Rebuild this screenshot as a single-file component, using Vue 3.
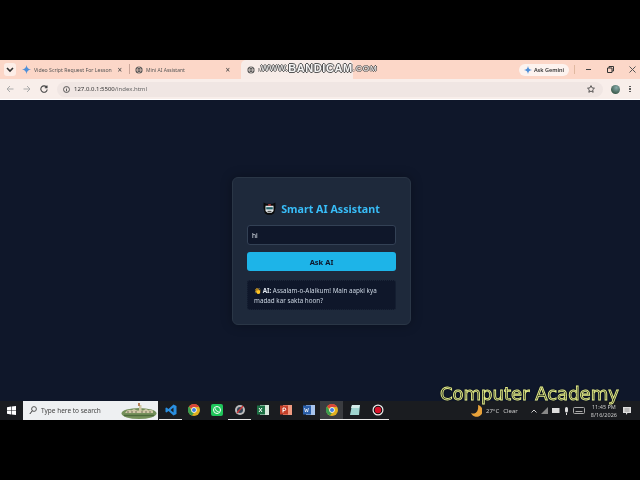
<script setup>
const taskIcons = ['vscode', 'chrome', 'whatsapp', 'eye', 'excel', 'ppt', 'word', 'chrome', 'note', 'rec']
const underlined = ['vscode', 'eye', 'note', 'rec']
</script>

<template>
  <div class="screen">
    <div class="letterbox-top"></div>

    <div class="tabstrip">
      <div class="tab-menu">
        <svg width="8" height="6" viewBox="0 0 8 6"><path d="M1 1l3 3 3-3" fill="none" stroke="#333" stroke-width="1.6" /></svg>
      </div>
      <div class="tab tab-first">
        <svg width="9" height="9" viewBox="0 0 10 10"><path d="M5 0c.5 3 1.500 4.500 5 5-3.500.5-4.500 2-5 5-.5-3-1.500-4.500-5-5 3.500-.5 4.500-2 5-5z" fill="#4f8fd8" /></svg>
        <span class="tab-title">Video Script Request For Lesson</span>
        <span class="tab-x">×</span>
      </div>
      <div class="tab-sep"></div>
      <div class="tab tab-second">
        <svg width="8" height="8" viewBox="0 0 10 10"><circle cx="5" cy="5" r="4.500" fill="#555" /><path d="M1 5h8M5 1c-3 2.500-3 5.500 0 8M5 1c3 2.500 3 5.500 0 8" stroke="#fbd9cb" stroke-width=".8" fill="none" /></svg>
        <span class="tab-title">Mini AI Assistant</span>
        <span class="tab-x">×</span>
      </div>
      <div class="tab tab-active">
        <svg width="8" height="8" viewBox="0 0 10 10"><circle cx="5" cy="5" r="4.500" fill="#555" /><path d="M1 5h8M5 1c-3 2.500-3 5.500 0 8M5 1c3 2.500 3 5.500 0 8" stroke="#f7ece8" stroke-width=".8" fill="none" /></svg>
        <span class="tab-title">M</span>
      </div>
      <div class="strip-right">
        <div class="gemini">
          <svg width="8" height="8" viewBox="0 0 10 10"><path d="M5 0c.5 3 1.500 4.500 5 5-3.500.5-4.500 2-5 5-.5-3-1.500-4.500-5-5 3.500-.5 4.500-2 5-5z" fill="#4f8fd8" /></svg>
          <span>Ask Gemini</span>
        </div>
        <div class="strip-sep"></div>
        <div class="win-controls">
          <svg width="7" height="7" viewBox="0 0 7 7"><path d="M1 3.500h5" stroke="#444" /></svg>
          <svg width="7" height="7" viewBox="0 0 7 7"><path d="M.5 2h4.500v4.500h-4.500zM2 2V.5h4.500V5H5" fill="none" stroke="#333" /></svg>
          <svg width="7" height="7" viewBox="0 0 7 7"><path d="M.5.5l6 6M6.500.5l-6 6" stroke="#555" /></svg>
        </div>
      </div>
    </div>

    <div class="toolbar">
      <svg class="nav" width="8" height="8" viewBox="0 0 8 8"><path d="M7.500 4H1M4 1L1 4l3 3" fill="none" stroke="#aaa" /></svg>
      <svg class="nav" width="8" height="8" viewBox="0 0 8 8"><path d="M.5 4H7M4 1l3 3-3 3" fill="none" stroke="#aaa" /></svg>
      <svg class="nav" width="8" height="8" viewBox="0 0 8 8"><path d="M6.800 2.500A3.200 3.200 0 1 0 7.200 4.500M7 .5v2.300H4.800" fill="none" stroke="#444" stroke-width="1.100" /></svg>
      <div class="omnibox">
        <svg width="7" height="7" viewBox="0 0 8 8"><circle cx="4" cy="4" r="3.400" fill="none" stroke="#444" /><path d="M4 3.500V6M4 2v.8" stroke="#444" /></svg>
        <span class="url">127.0.0.1:5500<span class="url-path">/index.html</span></span>
        <svg class="star" width="8" height="8" viewBox="0 0 10 10"><path d="M5 .8l1.300 2.800 3 .4-2.200 2.100.6 3L5 7.600 2.300 9.100l.6-3L.7 4l3-.4z" fill="none" stroke="#333" /></svg>
      </div>
      <div class="avatar"></div>
      <div class="dots"><i></i><i></i><i></i></div>
    </div>

    <main class="page">
      <div class="card">
        <h1 class="title">
          <svg width="13" height="13" viewBox="0 0 12 12">
            <path d="M.5 .5l2.500 1.200h6L11.500 .5v5l-1.200 4.800-2.300 1.500H4l-2.300-1.500L.5 5.500z" fill="#0a0a0a" />
            <path d="M2.300 3.500h7.400v4.800L8 10H4L2.300 8.300z" fill="#e4e8ea" />
            <path d="M3 4.800h6v2H3z" fill="#1f5f66" />
            <path d="M4.800 2.100h2.400v1.300H4.800z" fill="#c44" />
            <path d="M4.200 8.200h3.600v.8H4.200z" fill="#222" />
          </svg>
          <span>Smart AI Assistant</span>
        </h1>
        <input class="prompt" value="hi" />
        <button class="ask">Ask AI</button>
        <div class="reply">
          <span class="wave">👋</span> <b>AI:</b> Assalam-o-Alaikum! Main aapki kya madad kar sakta hoon?
        </div>
      </div>
    </main>

    <div class="taskbar">
      <svg class="start" width="9" height="9" viewBox="0 0 9 9"><path d="M0 1.200l4-.6v3.600H0zM4.600.5L9 0v4.200H4.600zM0 4.800h4v3.600l-4-.6zM4.600 4.800H9V9l-4.400-.6z" fill="#fff" /></svg>
      <div class="search">
        <svg width="8" height="9" viewBox="0 0 8 9"><circle cx="5" cy="3" r="2.400" fill="none" stroke="#333" stroke-width=".8" /><path d="M3.300 4.800L.8 8" stroke="#333" /></svg>
        <span>Type here to search</span>
        <svg class="search-art" width="36" height="17" viewBox="0 0 36 17">
          <ellipse cx="18" cy="11.500" rx="17.500" ry="5.500" fill="#74905a" />
          <path d="M4 11h28V8.500l-3-.8-1 .8-3-1.500-3 1.500h-1.500V3h-2.500v5.500h-2l-3-1.500-3 1.500-1-.8-3 .8z" fill="#cfc7a6" />
          <path d="M17 1h2v3h-2z" fill="#b5805a" />
          <path d="M7 11v-2M11 11v-2M15 11v-2M21 11v-2M25 11v-2M29 11v-2" stroke="#5a5a48" stroke-width=".8" />
          <path d="M3 13.500h30" stroke="#4e6a3c" stroke-width="1.500" />
        </svg>
      </div>
      <div class="task-icons">
        <div
          v-for="(icon, i) in taskIcons"
          :key="i"
          class="task-icon"
          :class="{ current: i === 7, open: underlined.includes(icon) || i === 7 }"
        >
          <svg v-if="icon === 'vscode'" width="12" height="12" viewBox="0 0 12 12"><path d="M8.500.5L11.500 2v8l-3 1.500L3.500 7 1.500 8.500.5 8V4l1-.5 2 1.500zM8.500 3.500L5.500 6l3 2.500z" fill="#2a8fe0" /></svg>
          <svg v-else-if="icon === 'chrome'" width="12" height="12" viewBox="0 0 12 12">
            <circle cx="6" cy="6" r="6" fill="#e0b020" />
            <path d="M6 0a6 6 0 0 1 5.200 3H6a3 3 0 0 0-2.800 1.800L1 2.300A6 6 0 0 1 6 0z" fill="#d8443a" />
            <path d="M1 2.300l2.400 4.200A3 3 0 0 0 6 9L3.800 11.600A6 6 0 0 1 1 2.300z" fill="#3a9d50" />
            <circle cx="6" cy="6" r="2.700" fill="#fff" /><circle cx="6" cy="6" r="2" fill="#3f7fe0" />
          </svg>
          <svg v-else-if="icon === 'whatsapp'" width="12" height="12" viewBox="0 0 12 12"><rect width="12" height="12" rx="2" fill="#1fc65a" /><circle cx="6" cy="6" r="3.500" fill="none" stroke="#fff" /><path d="M4.500 4.500c0 2 1 3 3 3" stroke="#fff" fill="none" /></svg>
          <svg v-else-if="icon === 'eye'" width="12" height="12" viewBox="0 0 12 12"><circle cx="6" cy="6" r="5" fill="#bbb" /><circle cx="6" cy="6" r="3" fill="#345" /><path d="M3 9l6-7" stroke="#c33" stroke-width="1.300" /></svg>
          <svg v-else-if="icon === 'excel'" width="12" height="12" viewBox="0 0 12 12"><rect x="3" y="1" width="9" height="10" fill="#d8e8dc" /><rect y="1.500" width="8" height="9" fill="#1d7044" /><path d="M2 4l3 4M5 4L2 8" stroke="#fff" /></svg>
          <svg v-else-if="icon === 'ppt'" width="12" height="12" viewBox="0 0 12 12"><rect x="3" y="1" width="9" height="10" fill="#ef9a80" /><rect y="1.500" width="8" height="9" fill="#c4402a" /><path d="M3 8.500V4h1.500a1 1 0 0 1 0 2.500H3" stroke="#fff" fill="none" /></svg>
          <svg v-else-if="icon === 'word'" width="12" height="12" viewBox="0 0 12 12"><rect x="3" y="1" width="9" height="10" fill="#a8c4ec" /><rect y="1.500" width="8" height="9" fill="#2a5ea8" /><path d="M1.500 4l1 4 1-3 1 3 1-4" stroke="#fff" fill="none" stroke-width=".7" /></svg>
          <svg v-else-if="icon === 'note'" width="12" height="12" viewBox="0 0 12 12"><path d="M3 1h8l-1 10H1z" fill="#9fd4cf" /><path d="M3 1h8l-1 3H2z" fill="#d5ece8" /></svg>
          <svg v-else width="12" height="12" viewBox="0 0 12 12"><circle cx="6" cy="6" r="5.500" fill="#eee" /><circle cx="6" cy="6" r="4.300" fill="#111" /><circle cx="6" cy="6" r="3.200" fill="#d8122a" /></svg>
        </div>
      </div>
      <div class="tray">
        <svg class="moon" width="11" height="12" viewBox="0 0 11 12"><path d="M7 0a6 6 0 1 1-7 8c3 1.500 8 0 7-8z" fill="#e8a23a" /></svg>
        <span class="weather">27°C</span>
        <span class="weather clear">Clear</span>
        <svg class="chev" width="6" height="4" viewBox="0 0 6 4"><path d="M.5 3.500L3 1l2.500 2.500" fill="none" stroke="#ccc" /></svg>
        <svg width="7" height="7" viewBox="0 0 7 7"><path d="M0 7L7 0v7z" fill="#888" /></svg>
        <svg width="8" height="5" viewBox="0 0 8 5"><rect x=".5" y=".5" width="6.500" height="4" fill="#ddd" stroke="#ddd" /></svg>
        <svg width="5" height="8" viewBox="0 0 5 8"><rect x="1" width="3" height="5.500" rx="1.500" fill="#ddd" /><path d="M2.500 6v2" stroke="#ddd" /></svg>
        <svg width="12" height="7" viewBox="0 0 12 7"><rect x=".5" y=".5" width="11" height="6" rx="1" fill="none" stroke="#aaa" /><path d="M2.500 4.500h7" stroke="#aaa" /></svg>
        <div class="clock"><span>11:45 PM</span><span>8/16/2026</span></div>
        <svg class="notes" width="8" height="8" viewBox="0 0 8 8"><path d="M0 0h8v6H4.500L3 8V6H0z" fill="#ddd" /><path d="M1.500 2h5M1.500 4h5" stroke="#666" stroke-width=".6" /></svg>
      </div>
    </div>

    <div class="letterbox-bottom"></div>

    <!-- recorder and channel overlays -->
    <div class="bandicam"><span class="bc-www">WWW.</span><b>BANDICAM</b><span class="bc-com">.COM</span></div>
    <div class="academy">Computer Academy</div>
  </div>
</template>

<style scoped>
.screen {
  position: relative;
  width: 640px;
  height: 480px;
  display: flex;
  flex-direction: column;
  background: #000;
  overflow: hidden;
  font-family: "Noto Sans", "Liberation Sans", sans-serif;
  filter: blur(0.35px);
}

.letterbox-top {
  height: 60px;
}

.letterbox-bottom {
  height: 60px;
}

.tabstrip {
  height: 19px;
  display: flex;
  align-items: flex-end;
  background: #fcd7c8;
  color: #555;
  font-size: 5.200px;
}

.tab-menu {
  width: 12px;
  height: 13px;
  margin: 0 0 3px 4px;
  border-radius: 3px;
  background: #fdeee8;
  display: flex;
  align-items: center;
  justify-content: center;
}

.tab {
  height: 19px;
  display: flex;
  align-items: center;
  gap: 3px;
  box-sizing: border-box;
  overflow: hidden;
}

.tab-first {
  width: 100px;
  margin-left: 6px;
}

.tab-second {
  width: 100px;
  margin-left: 5px;
  padding-right: 5px;
}

.tab-second .tab-title {
  font-size: 5px;
}

.tab-active {
  width: 112px;
  margin-left: 6px;
  padding-left: 6px;
  background: #f7ece8;
  border-radius: 5px 5px 0 0;
}

.tab-title {
  flex: 1;
  white-space: nowrap;
  overflow: hidden;
}

.tab-x {
  font-size: 8px;
  color: #444;
}

.tab-sep {
  width: 1px;
  height: 10px;
  margin: 0 0 5px 7px;
  background: #c9a598;
}

.strip-right {
  margin-left: auto;
  height: 19px;
  display: flex;
  align-items: center;
}

.gemini {
  width: 50px;
  height: 12px;
  box-sizing: border-box;
  display: flex;
  align-items: center;
  justify-content: center;
  gap: 2px;
  background: #fdf3ef;
  border-radius: 6px;
  color: #333;
  font-size: 5.500px;
  font-weight: 600;
}

.strip-sep {
  width: 1px;
  height: 9px;
  margin-left: 5px;
  background: #e0b8a0;
}

.win-controls {
  width: 65px;
  display: flex;
  gap: 15px;
  padding: 0 0 0 10px;
  box-sizing: border-box;
}

.toolbar {
  height: 21px;
  display: flex;
  align-items: center;
  padding: 0 4px 0 6px;
  box-sizing: border-box;
  background: #f8eeea;
  border-bottom: 1px solid #fff;
}

.nav {
  margin-right: 9px;
}

.omnibox {
  width: 546px;
  height: 15px;
  padding: 0 8px 0 6px;
  box-sizing: border-box;
  display: flex;
  align-items: center;
  gap: 4px;
  background: #f0e6e3;
  border-radius: 8px;
  font-size: 6px;
  color: #333;
}

.url-path {
  color: #666;
}

.star {
  margin-left: auto;
}

.avatar {
  width: 9px;
  height: 9px;
  margin-left: 8px;
  border-radius: 50%;
  background: radial-gradient(circle at 60% 30%, #8aa, #3f5f50 70%);
}

.dots {
  margin-left: 9px;
  display: flex;
  flex-direction: column;
  gap: 1px;
}

.dots i {
  width: 1.500px;
  height: 1.500px;
  background: #444;
  border-radius: 50%;
}

.page {
  flex: 1;
  background: #0f172a;
  display: flex;
  justify-content: center;
  padding-top: 77px;
  box-sizing: border-box;
}

.card {
  width: 179px;
  height: 148px;
  padding: 23px 14px 0;
  margin-left: 3px;
  box-sizing: border-box;
  background: #1e293b;
  border: 1px solid #2a3646;
  border-radius: 6px;
  box-shadow: 0 0 12px rgba(0, 0, 0, 0.3);
}

.title {
  margin: 0 0 9px;
  height: 15px;
  display: flex;
  align-items: center;
  justify-content: center;
  gap: 5px;
  font-size: 10.700px;
  font-weight: 700;
  color: #38bdf8;
}

.prompt {
  display: block;
  width: 100%;
  height: 20px;
  padding: 0 4px;
  box-sizing: border-box;
  background: #0f172a;
  border: 1px solid #334155;
  border-radius: 3px;
  color: #e2e8f0;
  font-family: inherit;
  font-size: 6.500px;
  outline: none;
}

.ask {
  display: block;
  width: 100%;
  height: 19px;
  margin-top: 7px;
  background: #1db4e8;
  border: none;
  border-radius: 3px;
  color: #0f172a;
  font-family: inherit;
  font-size: 7.500px;
  font-weight: 700;
}

.reply {
  height: 30px;
  margin-top: 9px;
  padding: 5px 6px 0;
  box-sizing: border-box;
  background: #0f172a;
  border: 1px dotted #1b2638;
  border-radius: 3px;
  color: #cbd5e1;
  font-size: 6.300px;
  line-height: 9px;
}

.reply b {
  color: #e2e8f0;
}

.wave {
  font-size: 6px;
  color: #e8b23a;
}

.taskbar {
  height: 19px;
  display: flex;
  align-items: center;
  background: #1a1c20;
  color: #ddd;
}

.start {
  margin: 0 7px;
  flex: none;
}

.search {
  width: 135px;
  height: 19px;
  padding-left: 6px;
  box-sizing: border-box;
  display: flex;
  align-items: center;
  gap: 4px;
  background: #eef0f2;
  color: #444;
  font-size: 6.500px;
}

.search-art {
  margin-left: auto;
  margin-right: 1px;
}

.task-icons {
  display: flex;
  margin-left: 1px;
}

.task-icon {
  width: 23px;
  height: 19px;
  display: flex;
  align-items: center;
  justify-content: center;
  box-sizing: border-box;
  border-bottom: 1px solid transparent;
}

.task-icon.open {
  border-bottom-color: #e8e8e8;
}

.task-icon.current {
  background: #3a3c40;
}

.tray {
  flex: 1;
  display: flex;
  align-items: center;
  gap: 4px;
  padding-left: 82px;
  min-width: 0;
}

.weather {
  font-size: 6px;
  color: #ccc;
  white-space: nowrap;
}

.clear {
  margin-right: 9px;
}

.clock {
  margin-left: 2px;
  display: flex;
  flex-direction: column;
  align-items: center;
  font-size: 5.500px;
  line-height: 8px;
  color: #ccc;
  white-space: nowrap;
}

.notes {
  margin-left: 2px;
}

.bandicam {
  position: absolute;
  left: 261px;
  top: 61px;
  height: 14px;
  display: flex;
  align-items: center;
  font-family: "Liberation Sans", sans-serif;
  color: #f4f4f4;
  white-space: nowrap;
  text-shadow: 1px 0 0 #555, -1px 0 0 #555, 0 1px 0 #555, 0 -1px 0 #555;
}

.bandicam b {
  font-size: 11px;
  letter-spacing: 0.6px;
}

.bc-www {
  font-size: 8.500px;
  letter-spacing: 0.3px;
}

.bc-com {
  font-size: 8px;
  letter-spacing: 1px;
}

.academy {
  position: absolute;
  left: 440px;
  top: 382px;
  font-family: "DejaVu Sans", sans-serif;
  font-size: 18px;
  line-height: 24px;
  color: #1a2016;
  white-space: nowrap;
  -webkit-text-stroke: 0.9px #e6ee8a;
  text-shadow: 0 0 2px #000;
}
</style>
